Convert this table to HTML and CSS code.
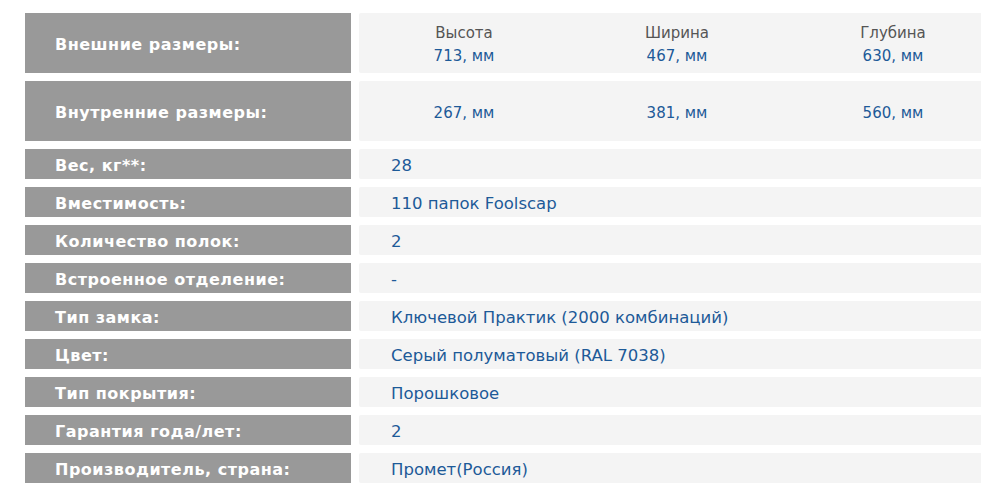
FILE: index.html
```html
<!DOCTYPE html>
<html lang="ru">
<head>
<meta charset="utf-8">
<link rel="stylesheet" href="styles.css">
</head>
<body>
<div class="specs">
  <div class="label">Внешние размеры:</div>
  <div class="value dims">
    <div class="dim"><span class="dim-head">Высота</span><span class="dim-val">713, мм</span></div>
    <div class="dim"><span class="dim-head">Ширина</span><span class="dim-val">467, мм</span></div>
    <div class="dim"><span class="dim-head">Глубина</span><span class="dim-val">630, мм</span></div>
  </div>

  <div class="label">Внутренние размеры:</div>
  <div class="value dims">
    <div class="dim"><span class="dim-val">267, мм</span></div>
    <div class="dim"><span class="dim-val">381, мм</span></div>
    <div class="dim"><span class="dim-val">560, мм</span></div>
  </div>

  <div class="label">Вес, кг**:</div>
  <div class="value">28</div>

  <div class="label">Вместимость:</div>
  <div class="value">110 папок Foolscap</div>

  <div class="label">Количество полок:</div>
  <div class="value">2</div>

  <div class="label">Встроенное отделение:</div>
  <div class="value">-</div>

  <div class="label">Тип замка:</div>
  <div class="value">Ключевой Практик (2000 комбинаций)</div>

  <div class="label">Цвет:</div>
  <div class="value">Серый полуматовый (RAL 7038)</div>

  <div class="label">Тип покрытия:</div>
  <div class="value">Порошковое</div>

  <div class="label">Гарантия года/лет:</div>
  <div class="value">2</div>

  <div class="label">Производитель, страна:</div>
  <div class="value">Промет(Россия)</div>
</div>
</body>
</html>
```

FILE: styles.css
```css
html, body {
  margin: 0;
  padding: 0;
  background: #ffffff;
  overflow: hidden;
}

body {
  font-family: "DejaVu Sans", Verdana, sans-serif;
  width: 981px;
  height: 500px;
}

.specs {
  display: grid;
  grid-template-columns: 326px 1fr;
  grid-template-rows: 60px 60px repeat(9, 30px);
  column-gap: 8px;
  row-gap: 8px;
  padding: 13px 0 0 25px;
}

.label {
  background: #999999;
  color: #ffffff;
  font-weight: bold;
  font-size: 16px;
  letter-spacing: 0.5px;
  padding: 3px 0 0 30px;
  display: flex;
  align-items: center;
}

.value {
  background: #f4f4f4;
  color: #1d5a98;
  font-size: 16.5px;
  padding: 3px 0 0 32px;
  display: flex;
  align-items: center;
  border-radius: 2px 0 0 2px;
}

.dims {
  padding-left: 0;
  padding-top: 4px;
  font-size: 15px;
  display: grid;
  grid-template-columns: 210px 216px 216px;
  align-items: center;
}

.dim {
  display: flex;
  flex-direction: column;
  align-items: center;
  line-height: 23px;
}

.dim-head {
  color: #555555;
}

.dim-val {
  color: #1d5a98;
}
```
